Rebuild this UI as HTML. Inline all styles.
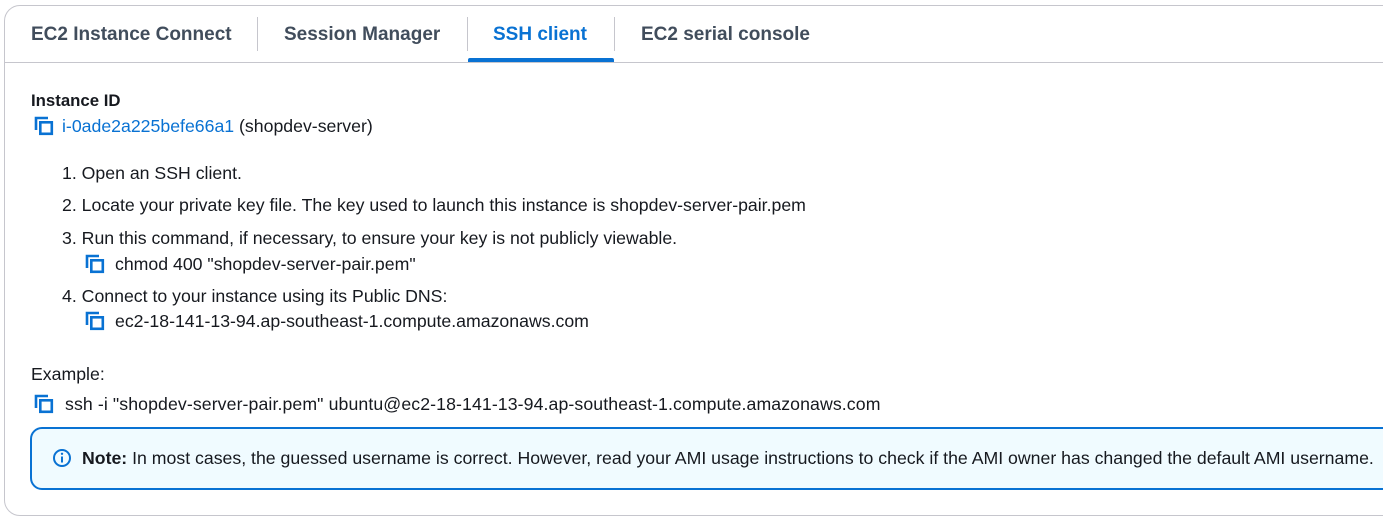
<!DOCTYPE html>
<html><head><meta charset="utf-8"><style>
*{margin:0;padding:0;box-sizing:border-box}
body{width:1383px;height:520px;background:#fff;font-family:"Liberation Sans",sans-serif;color:#16191f;position:relative;overflow:hidden}
.box{position:absolute;left:4px;top:5px;width:1420px;height:511px;border:1px solid #c6c6cd;border-radius:16px}
.t{position:absolute;white-space:nowrap;font-size:17.7px;line-height:20px}
.tab{position:absolute;top:24px;font-weight:bold;font-size:19px;color:#414d5c;line-height:22px}
.sep{position:absolute;top:17px;width:1px;height:34px;background:#c6c6cd}
svg.c{position:absolute;width:20px;height:20px}
a{color:#0972d3;text-decoration:none}
</style></head><body>
<div class="box"></div>
<div class="tab" style="left:31px">EC2 Instance Connect</div>
<div class="sep" style="left:257px"></div>
<div class="tab" style="left:284px">Session Manager</div>
<div class="sep" style="left:467px"></div>
<div class="tab" style="left:493px;color:#0972d3">SSH client</div>
<div style="position:absolute;left:468px;top:58px;width:146px;height:4px;background:#0972d3;border-radius:2px 2px 0 0"></div>
<div class="sep" style="left:614px"></div>
<div class="tab" style="left:641px">EC2 serial console</div>
<div style="position:absolute;left:5px;top:62px;width:1380px;height:1px;background:#c6c6cd"></div>

<svg width="0" height="0" style="position:absolute"><defs><symbol id="cp" viewBox="0 0 20 20"><path d="M2 14V2h12" fill="none" stroke="#0972d3" stroke-width="2.6"/><rect x="6.3" y="6.3" width="11.5" height="11.5" fill="none" stroke="#0972d3" stroke-width="2.6"/></symbol></defs></svg>

<div class="t" style="left:31px;top:91px;font-weight:bold;font-size:16.8px">Instance ID</div>
<svg class="c" style="left:34px;top:116px"><use href="#cp"/></svg>
<div class="t" style="left:62px;top:116px"><a>i-0ade2a225befe66a1</a> (shopdev-server)</div>

<div class="t" style="left:62px;top:163px">1. Open an SSH client.</div>
<div class="t" style="left:62px;top:195px">2. Locate your private key file. The key used to launch this instance is shopdev-server-pair.pem</div>
<div class="t" style="left:62px;top:228px">3. Run this command, if necessary, to ensure your key is not publicly viewable.</div>
<svg class="c" style="left:85px;top:254px"><use href="#cp"/></svg>
<div class="t" style="left:115px;top:254px">chmod 400 "shopdev-server-pair.pem"</div>
<div class="t" style="left:62px;top:286px">4. Connect to your instance using its Public DNS:</div>
<svg class="c" style="left:85px;top:311px"><use href="#cp"/></svg>
<div class="t" style="left:115px;top:311px">ec2-18-141-13-94.ap-southeast-1.compute.amazonaws.com</div>

<div class="t" style="left:31px;top:364px">Example:</div>
<svg class="c" style="left:34px;top:394px"><use href="#cp"/></svg>
<div class="t" style="left:65px;top:394px;letter-spacing:0.1px">ssh -i "shopdev-server-pair.pem" ubuntu@ec2-18-141-13-94.ap-southeast-1.compute.amazonaws.com</div>

<div style="position:absolute;left:30px;top:427px;width:1400px;height:63px;border:2px solid #0972d3;border-radius:12px;background:#f0fbff"></div>
<svg style="position:absolute;left:52px;top:448px" width="20" height="20" viewBox="0 0 20 20"><circle cx="10" cy="10" r="8" fill="none" stroke="#0972d3" stroke-width="2"/><path d="M10 8.5v6" stroke="#0972d3" stroke-width="2"/><circle cx="10" cy="5.8" r="1.2" fill="#0972d3"/></svg>
<div class="t" style="left:82px;top:448px"><b>Note:</b> In most cases, the guessed username is correct. However, read your AMI usage instructions to check if the AMI owner has changed the default AMI username.</div>
</body></html>
